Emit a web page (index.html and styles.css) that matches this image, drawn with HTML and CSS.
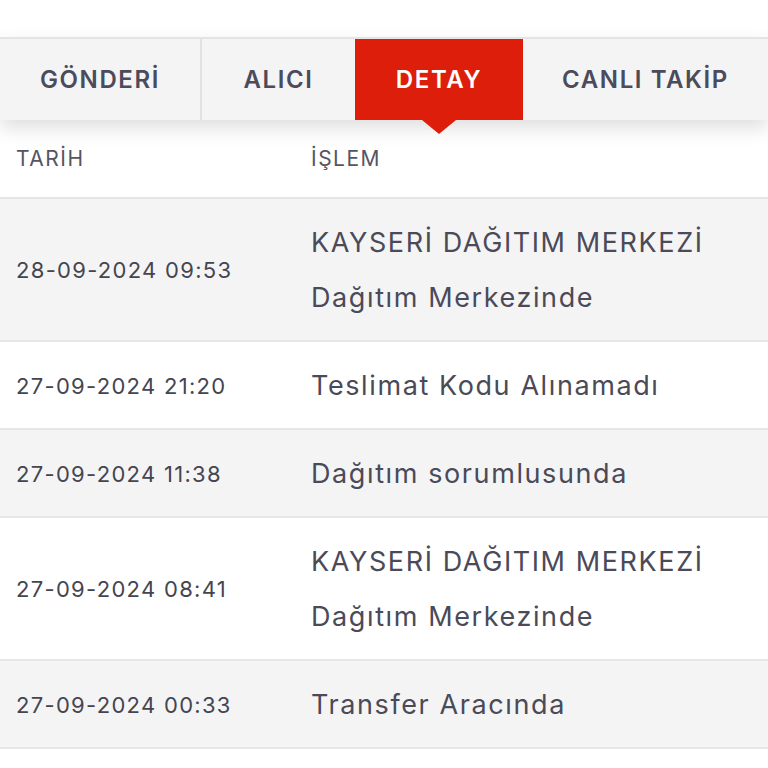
FILE: index.html
```html
<!DOCTYPE html>
<html lang="tr">
<head>
<meta charset="utf-8">
<link rel="stylesheet" href="styles.css">
</head>
<body>
<div class="page">
  <nav class="tabs">
    <div class="tab t1">GÖNDERİ</div>
    <div class="tab t2">ALICI</div>
    <div class="tab t3 active">DETAY</div>
    <div class="tab t4">CANLI TAKİP</div>
  </nav>
  <div class="table">
    <div class="row head">
      <div class="c1">TARİH</div>
      <div class="c2">İŞLEM</div>
    </div>
    <div class="row gray">
      <div class="c1 date">28-09-2024 09:53</div>
      <div class="c2 op">KAYSERİ DAĞITIM MERKEZİ<br>Dağıtım Merkezinde</div>
    </div>
    <div class="row">
      <div class="c1 date">27-09-2024 21:20</div>
      <div class="c2 op">Teslimat Kodu Alınamadı</div>
    </div>
    <div class="row gray">
      <div class="c1 date">27-09-2024 11:38</div>
      <div class="c2 op">Dağıtım sorumlusunda</div>
    </div>
    <div class="row">
      <div class="c1 date">27-09-2024 08:41</div>
      <div class="c2 op">KAYSERİ DAĞITIM MERKEZİ<br>Dağıtım Merkezinde</div>
    </div>
    <div class="row gray">
      <div class="c1 date">27-09-2024 00:33</div>
      <div class="c2 op">Transfer Aracında</div>
    </div>
  </div>
</div>
</body>
</html>
```
FILE: styles.css
```css
html, body {
  margin: 0;
  padding: 0;
  background: #fff;
}
body {
  font-family: "Inter", "Noto Sans", sans-serif;
  color: #4a4a58;
}
.page {
  padding-top: 37px;
}
.tabs {
  display: flex;
  height: 81px;
  background: #f4f4f5;
  border-top: 2px solid #e4e4e6;
  box-shadow: 0 8px 18px rgba(0, 0, 0, 0.13);
  position: relative;
  z-index: 2;
}
.tab {
  display: flex;
  align-items: center;
  justify-content: center;
  font-weight: 600;
  font-size: 24px;
  color: #4b4b5c;
  letter-spacing: 1.6px;
  position: relative;
}
.t1 { width: 202px; border-right: 2px solid #e2e2e4; box-sizing: border-box; }
.t2 { width: 153px; }
.t3 { width: 168px; }
.t4 { flex: 1; }
.tab.active {
  background: #dc1e0a;
  color: #fff;
}
.tab.active::after {
  content: "";
  position: absolute;
  left: 50%;
  bottom: -14px;
  margin-left: -17px;
  border-left: 17px solid transparent;
  border-right: 17px solid transparent;
  border-top: 14px solid #dc1e0a;
}
.table {
  position: relative;
  z-index: 1;
}
.row {
  display: grid;
  grid-template-columns: 295px 1fr;
  border-bottom: 2px solid #e6e6e8;
  padding: 16px 0 15px;
  align-items: center;
}
.row.gray { background: #f4f4f5; }
.row.head {
  padding: 0;
  height: 77px;
  font-size: 21px;
  letter-spacing: 1.5px;
  color: #555562;
}
.c1 { padding-left: 16px; }
.c2 { padding-left: 16px; }
.date {
  font-size: 22px;
  letter-spacing: 1.3px;
  color: #454550;
}
.op {
  font-size: 27px;
  line-height: 55px;
  letter-spacing: 1.6px;
  color: #4a4a58;
}
```
